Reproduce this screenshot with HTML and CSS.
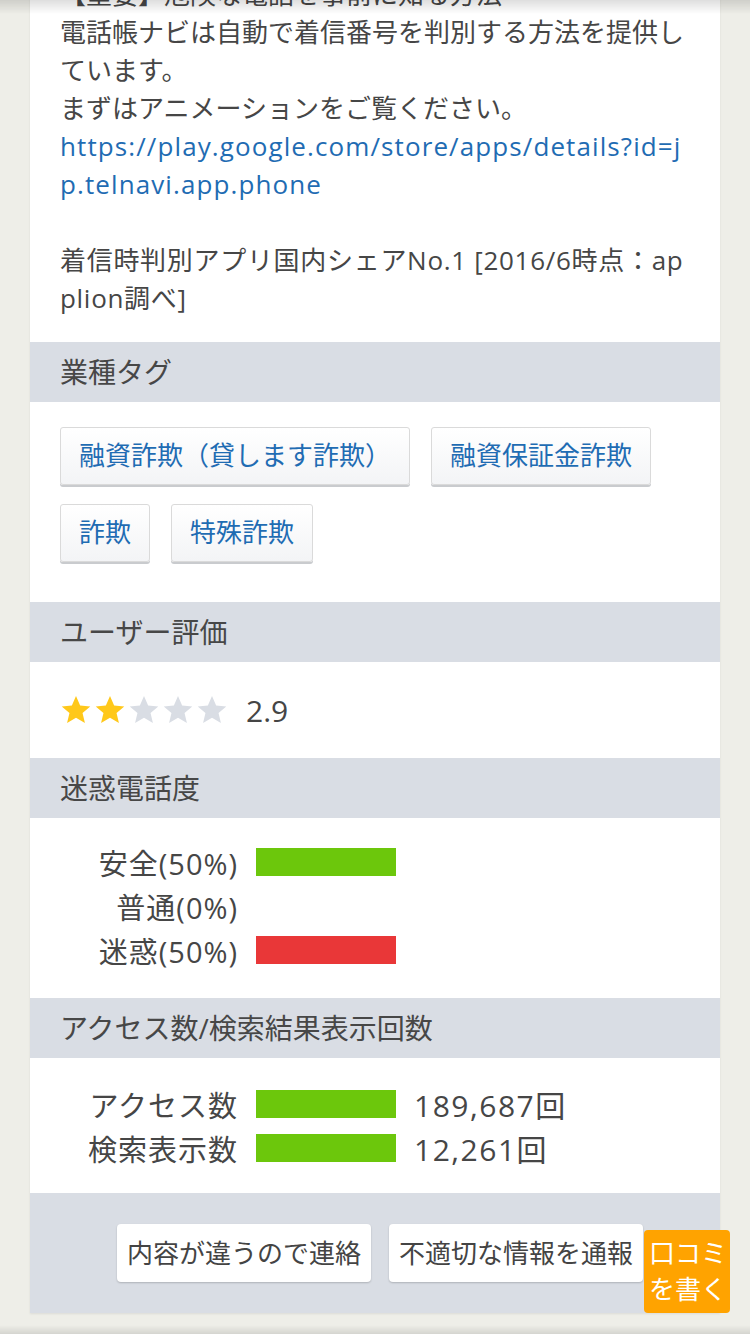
FILE: index.html
```html
<!DOCTYPE html>
<html lang="ja">
<head>
<meta charset="utf-8">
<title>電話帳ナビ</title>
<link rel="stylesheet" href="styles.css">
</head>
<body>
<div class="topshade"></div>
<main class="card">
  <div class="intro">
    <p>【重要】危険な電話を事前に知る方法<br>電話帳ナビは自動で着信番号を判別する方法を提供しています。<br>まずはアニメーションをご覧ください。<br><a class="link" href="#">https://play.google.com/store/apps/details?id=jp.telnavi.app.phone</a></p>
    <p class="share">着信時判別アプリ国内シェアNo.1 [2016/6時点：applion調べ]</p>
  </div>

  <h2 class="sec-head">業種タグ</h2>
  <div class="tags">
    <a class="tag" href="#">融資詐欺（貸します詐欺）</a>
    <a class="tag" href="#">融資保証金詐欺</a>
    <a class="tag" href="#">詐欺</a>
    <a class="tag" href="#">特殊詐欺</a>
  </div>

  <h2 class="sec-head">ユーザー評価</h2>
  <div class="rating">
    <div class="stars">
      <svg class="star on" viewBox="0 0 24 24"><path d="M12 1.5l3.1 7.1 7.6.7-5.8 5 1.8 7.5L12 17.8l-6.7 4 1.8-7.5-5.8-5 7.6-.7z"/></svg>
      <svg class="star on" viewBox="0 0 24 24"><path d="M12 1.5l3.1 7.1 7.6.7-5.8 5 1.8 7.5L12 17.8l-6.7 4 1.8-7.5-5.8-5 7.6-.7z"/></svg>
      <svg class="star" viewBox="0 0 24 24"><path d="M12 1.5l3.1 7.1 7.6.7-5.8 5 1.8 7.5L12 17.8l-6.7 4 1.8-7.5-5.8-5 7.6-.7z"/></svg>
      <svg class="star" viewBox="0 0 24 24"><path d="M12 1.5l3.1 7.1 7.6.7-5.8 5 1.8 7.5L12 17.8l-6.7 4 1.8-7.5-5.8-5 7.6-.7z"/></svg>
      <svg class="star" viewBox="0 0 24 24"><path d="M12 1.5l3.1 7.1 7.6.7-5.8 5 1.8 7.5L12 17.8l-6.7 4 1.8-7.5-5.8-5 7.6-.7z"/></svg>
    </div>
    <span class="score">2.9</span>
  </div>

  <h2 class="sec-head">迷惑電話度</h2>
  <div class="stats stats-nuisance">
    <div class="row"><span class="label">安全(50%)</span><span class="bar green"></span></div>
    <div class="row"><span class="label">普通(0%)</span></div>
    <div class="row"><span class="label">迷惑(50%)</span><span class="bar red"></span></div>
  </div>

  <h2 class="sec-head">アクセス数/検索結果表示回数</h2>
  <div class="stats stats-access">
    <div class="row"><span class="label">アクセス数</span><span class="bar green"></span><span class="count">189,687回</span></div>
    <div class="row"><span class="label">検索表示数</span><span class="bar green"></span><span class="count">12,261回</span></div>
  </div>

  <div class="actions">
    <a class="act-btn" href="#">内容が違うので連絡</a>
    <a class="act-btn" href="#">不適切な情報を通報</a>
  </div>
</main>
<a class="review-btn" href="#">口コミ<br>を書く</a>
<div class="bottomshade"></div>
</body>
</html>
```

FILE: styles.css
```css
html, body {
  margin: 0;
  padding: 0;
}
body {
  background: #eeeee8;
  font-family: "Open Sans", "Noto Sans CJK JP", sans-serif;
  color: #464646;
  height: 1334px;
  overflow: hidden;
}
.card {
  margin: -25px 30px 0;
  background: #fff;
  box-shadow: 0 1px 2px rgba(0,0,0,0.08);
}
.intro {
  padding: 0 30px 25px;
  font-size: 26px;
  line-height: 38px;
  word-break: break-all;
}
.intro p {
  margin: 0;
}
.intro .share {
  margin-top: 38px;
  letter-spacing: 0.7px;
}
.link {
  color: #1f6cb3;
  text-decoration: none;
  letter-spacing: 1.1px;
}
.sec-head {
  margin: 0;
  height: 60px;
  line-height: 60px;
  padding: 0 30px;
  background: #d9dde4;
  font-size: 28px;
  font-weight: normal;
  color: #474747;
}
.tags {
  display: flex;
  flex-wrap: wrap;
  gap: 19px 21px;
  padding: 25px 30px 40px;
}
.tag {
  display: block;
  height: 56px;
  line-height: 54px;
  padding: 0 18px;
  border: 1px solid #dadada;
  border-radius: 3px;
  background: linear-gradient(#ffffff, #f3f4f6);
  box-shadow: 0 2px 0 #c9cbce;
  color: #1f6cb3;
  font-size: 26px;
  text-decoration: none;
}
.rating {
  height: 96px;
  display: flex;
  align-items: center;
  padding: 0 30px;
}
.stars {
  display: flex;
  gap: 2px;
}
.star {
  width: 32px;
  height: 32px;
  fill: #d9dde4;
}
.star.on {
  fill: #ffc81a;
}
.score {
  margin-left: 18px;
  font-size: 30px;
  color: #454545;
}
.stats {
  padding: 22px 30px 26px;
}
.stats-access {
  padding: 24px 30px 23px;
}
.row {
  display: flex;
  align-items: center;
  height: 44px;
  gap: 18px;
}
.label {
  width: 178px;
  text-align: right;
  font-size: 29px;
  letter-spacing: 1px;
  white-space: nowrap;
}
.bar {
  width: 140px;
  height: 28px;
}
.bar.green {
  background: #6cc70c;
}
.bar.red {
  background: #e93738;
}
.count {
  font-size: 30px;
  letter-spacing: 1.5px;
}
.actions {
  background: #d9dde4;
  display: flex;
  justify-content: flex-end;
  gap: 18px;
  padding: 31px 77px 31px 0;
}
.act-btn {
  display: block;
  height: 58px;
  line-height: 58px;
  padding: 0 10px;
  background: #fff;
  border-radius: 4px;
  box-shadow: 0 1px 2px rgba(0,0,0,0.2);
  color: #444;
  font-size: 26px;
  text-decoration: none;
}
.review-btn {
  position: fixed;
  right: 20px;
  bottom: 21px;
  width: 86px;
  height: 83px;
  box-sizing: border-box;
  padding: 5px 0 0 5px;
  background: #ffa300;
  border-radius: 4px;
  color: #fff;
  font-size: 26px;
  line-height: 36px;
  text-decoration: none;
}
.topshade {
  position: fixed;
  left: 0;
  right: 0;
  top: 0;
  height: 14px;
  background: linear-gradient(rgba(0,0,0,0.13), rgba(0,0,0,0));
  z-index: 5;
}
.bottomshade {
  position: fixed;
  left: 0;
  right: 0;
  bottom: 0;
  height: 9px;
  background: linear-gradient(rgba(0,0,0,0), rgba(0,0,0,0.1));
}
```
